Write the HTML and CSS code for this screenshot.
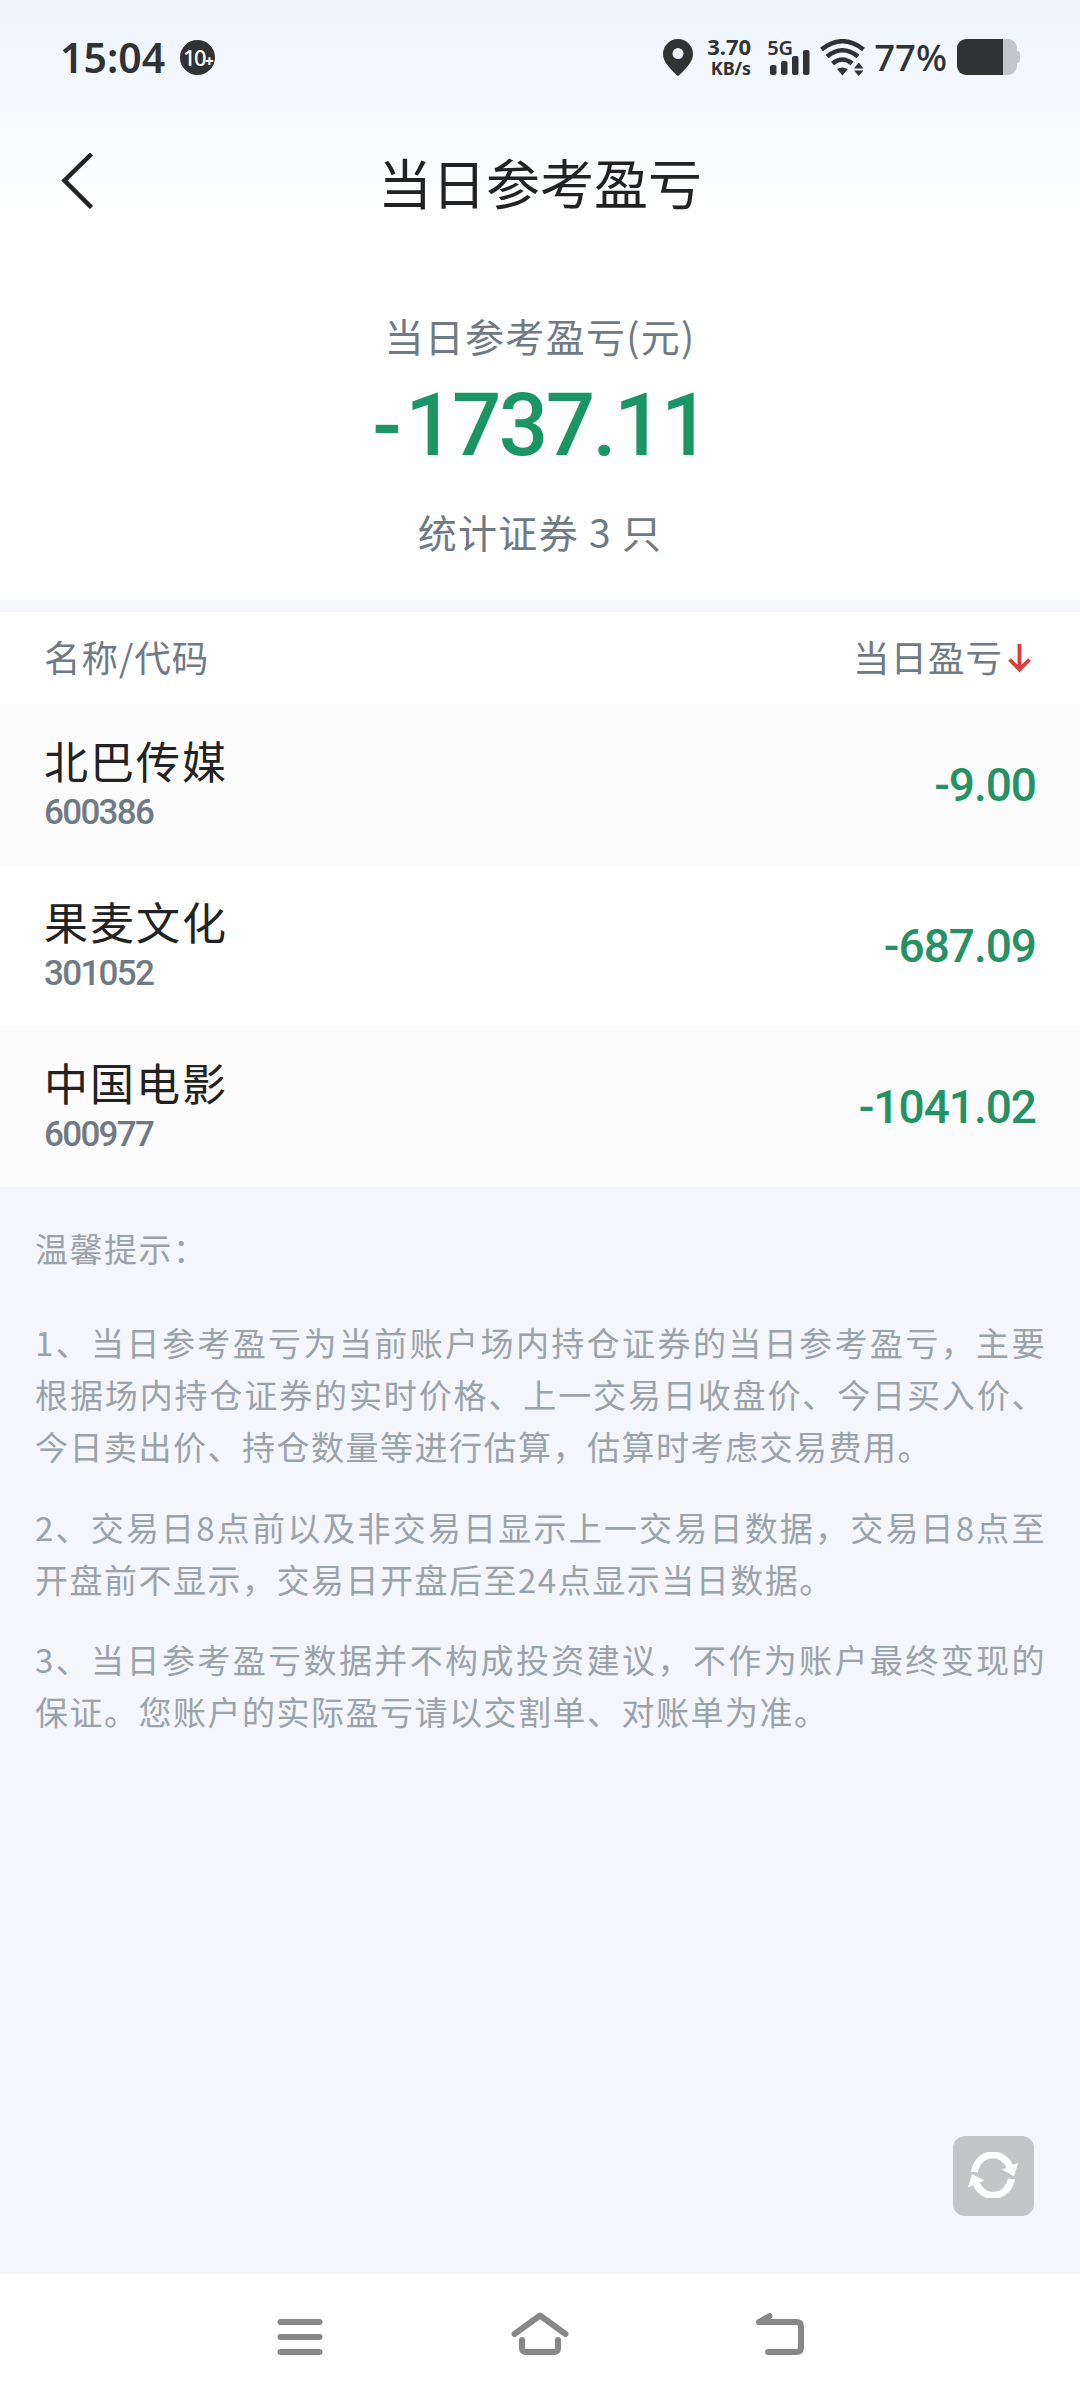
FILE: index.html
```html
<!DOCTYPE html>
<html lang="zh-CN">
<head>
    <meta charset="UTF-8">
    <meta name="viewport" content="width=device-width, initial-scale=1.0">
    <title>当日参考盈亏</title>
    <link rel="stylesheet" href="styles.css">
</head>
<body>
    <div class="page">
        <header class="header">
            <div class="status-bar">
                <div class="status-left">
                    <span class="time">15:04</span>
                    <span class="badge">10<span class="badge-plus">+</span></span>
                </div>
                <div class="status-right">
                    <svg class="icon-pin" width="30" height="37" viewBox="0 0 30 37">
                        <path fill="#303234" fill-rule="evenodd" d="M15 0a15 15 0 0 1 15 15c0 8-6 13-13.500 21q-1.500 1.500-3 0C6 28 0 23 0 15A15 15 0 0 1 15 0zm0 9a5.500 5.500 0 1 0 0 11a5.500 5.500 0 0 0 0-11z"/>
                    </svg>
                    <div class="speed"><span>3.70</span><span class="speed-unit">KB/s</span></div>
                    <div class="signal">
                        <span class="network">5G</span>
                        <svg class="bars" width="40" height="26" viewBox="0 0 40 26" fill="#303234">
                            <rect x="0" y="15" width="6.500" height="10" rx="2"/>
                            <rect x="11" y="11" width="6.500" height="14" rx="2"/>
                            <rect x="22" y="6" width="6.500" height="19" rx="2"/>
                            <rect x="33" y="0" width="6.500" height="25" rx="2"/>
                        </svg>
                    </div>
                    <svg class="icon-wifi" width="45" height="37" viewBox="0 0 45 37">
                        <g fill="none" stroke="#303234" stroke-width="4.500">
                            <path d="M1.500 10.500Q22.500-6 43.500 10.500"/>
                            <path d="M7 17.500Q22.500 5 38 17.500"/>
                            <path d="M12.500 24.500Q22.500 16.500 32 24.500"/>
                        </g>
                        <path fill="#303234" d="M17 30q5.500-3 11 0l-5.500 6.500zM34 29.500h9.500l-4.750-6zM34 31.500h9.500l-4.750 5.500z"/>
                    </svg>
                    <span class="battery-text">77%</span>
                    <svg class="icon-battery" width="64" height="36" viewBox="0 0 64 36">
                        <path fill="#c3c6ca" d="M45 0h6a9 9 0 0 1 9 9v3q3 0 3 3v6q0 3-3 3v3a9 9 0 0 1-9 9h-6z"/>
                        <path fill="#303234" d="M9 0h37v36H9a9 9 0 0 1-9-9V9a9 9 0 0 1 9-9z"/>
                    </svg>
                </div>
            </div>
            <div class="title-bar">
                <svg class="icon-back" width="34" height="60" viewBox="0 0 34 60">
                    <path d="M31.500 1L4.500 27.500L31.500 54.500" fill="none" stroke="#222" stroke-width="4.500"/>
                </svg>
                <h1 class="title">当日参考盈亏</h1>
            </div>
        </header>

        <section class="summary">
            <div class="summary-label">当日参考盈亏(元)</div>
            <div class="summary-value"><span class="minus">-</span>1737.11</div>
            <div class="summary-count">统计证券 3 只</div>
        </section>

        <section class="stocks">
            <div class="stocks-head">
                <span>名称/代码</span>
                <span class="sort">当日盈亏
                    <svg class="icon-sort" width="23" height="28" viewBox="0 0 23 28">
                        <path d="M11.500 0V25M1.500 15.500L11.500 25.500L21.500 15.500" fill="none" stroke="#e03c3c" stroke-width="3.800"/>
                    </svg>
                </span>
            </div>
            <div class="stock">
                <div>
                    <div class="stock-name">北巴传媒</div>
                    <div class="stock-code">600386</div>
                </div>
                <div class="stock-profit">-9.00</div>
            </div>
            <div class="stock">
                <div>
                    <div class="stock-name">果麦文化</div>
                    <div class="stock-code">301052</div>
                </div>
                <div class="stock-profit">-687.09</div>
            </div>
            <div class="stock">
                <div>
                    <div class="stock-name">中国电影</div>
                    <div class="stock-code">600977</div>
                </div>
                <div class="stock-profit">-1041.02</div>
            </div>
        </section>

        <section class="tips">
            <p class="tips-title">温馨提示：</p>
            <p>1、当日参考盈亏为当前账户场内持仓证券的当日参考盈亏，主要根据场内持仓证券的实时价格、上一交易日收盘价、今日买入价、今日卖出价、持仓数量等进行估算，估算时考虑交易费用。</p>
            <p>2、交易日8点前以及非交易日显示上一交易日数据，交易日8点至开盘前不显示，交易日开盘后至24点显示当日数据。</p>
            <p>3、当日参考盈亏数据并不构成投资建议，不作为账户最终变现的保证。您账户的实际盈亏请以交割单、对账单为准。</p>
        </section>

        <button class="refresh" aria-label="刷新">
            <svg width="50" height="46" viewBox="0 0 50 46">
                <g fill="none" stroke="#fff" stroke-width="7">
                    <path d="M6.500 20A18.500 19.500 0 0 1 42 15"/>
                    <path d="M43.500 27A18.500 19.500 0 0 1 8 31"/>
                </g>
                <path fill="#fff" d="M34 17.500L50 11L46 24.500zM0 35.500L4 22L16.500 28.500z"/>
            </svg>
        </button>

        <nav class="bottom-nav">
            <svg width="60" height="50" viewBox="0 0 60 50">
                <path d="M10.500 12H49.500M10.500 27H49.500M10.500 42H49.500"/>
            </svg>
            <svg width="60" height="50" viewBox="0 0 60 50">
                <path d="M4.500 24L30 5.500L55.500 24M12 30V38Q12 42 16 42H44Q48 42 48 38V30"/>
            </svg>
            <svg width="60" height="50" viewBox="0 0 60 50">
                <path d="M19.500 6L9 12H46.500Q51 12 51 16.500V37.500Q51 42 46.500 42H18"/>
            </svg>
        </nav>
    </div>
</body>
</html>
```
FILE: styles.css
```css
* {
    box-sizing: border-box;
    margin: 0;
    padding: 0;
}

body {
    font-family: "Noto Sans CJK SC", sans-serif;
    background-color: #f4f6fb;
    color: #222;
}

.page {
    position: relative;
    display: flex;
    flex-direction: column;
    width: 1080px;
    height: 2400px;
}

/* Header */
.header {
    height: 252px;
    background: linear-gradient(#eef5fe, #f5f8fe 35%, #fff 90%);
}

.status-bar {
    display: flex;
    justify-content: space-between;
    align-items: center;
    height: 114px;
    padding: 0 60px;
    color: #303234;
    font-family: "Noto Sans", sans-serif;
    font-weight: 600;
}

.status-left,
.status-right {
    display: flex;
    align-items: center;
}

.time {
    font-size: 41px;
    line-height: 56px;
}

.badge {
    display: flex;
    justify-content: center;
    align-items: center;
    width: 35px;
    height: 35px;
    margin-left: 15px;
    border-radius: 50%;
    background-color: #303234;
    color: #fff;
    font-size: 22px;
    font-weight: 500;
    letter-spacing: -1.5px;
}

.badge-plus {
    margin-top: 8px;
    font-size: 15px;
    font-weight: 900;
}

.speed {
    display: flex;
    flex-direction: column;
    align-items: flex-end;
    width: 46px;
    margin-left: 12px;
    font-size: 22px;
    font-weight: 700;
    line-height: 22px;
}

.speed-unit {
    font-size: 18px;
}

.signal {
    display: flex;
    flex-direction: column;
    width: 43px;
    height: 38px;
    margin-left: 16px;
}

.network {
    font-size: 20px;
    line-height: 19px;
}

.bars {
    margin: -7px 0 0 3px;
}

.icon-wifi {
    margin-left: 10px;
}

.battery-text {
    margin-left: 9px;
    font-size: 36.5px;
    font-weight: 500;
    line-height: 50px;
}

.icon-battery {
    margin-left: 10px;
    margin-right: -1px;
}

.title-bar {
    display: grid;
    grid-template-columns: 60px 1fr 60px;
    align-items: center;
    height: 138px;
    padding: 0 60px;
}

.title {
    padding-bottom: 3px;
    font-size: 54px;
    font-weight: 400;
    line-height: 80px;
    text-align: center;
}

/* Summary */
.summary {
    height: 360px;
    padding-top: 53px;
    border-bottom: 12px solid #f4f6fb;
    background-color: #fff;
    color: #707a85;
    text-align: center;
}

.summary-label,
.summary-count {
    font-size: 39px;
    line-height: 60px;
    letter-spacing: 1.3px;
}

.summary-value {
    margin: 8px 0 24px;
    color: #1a9563;
    font-family: Roboto, sans-serif;
    font-size: 87px;
    font-weight: 500;
    line-height: 104px;
    letter-spacing: -2.6px;
}

.minus {
    margin-right: 6px;
}

/* Stock list */
.stocks-head {
    display: flex;
    justify-content: space-between;
    align-items: center;
    height: 92px;
    padding: 0 44px 4px;
    background-color: #fff;
    color: #707a85;
    font-size: 36.5px;
    letter-spacing: 1px;
}

.sort {
    display: flex;
    align-items: center;
    gap: 5px;
    padding-right: 5px;
}

.icon-sort {
    margin-top: 4px;
}

.stock {
    display: flex;
    justify-content: space-between;
    align-items: center;
    height: 161px;
    padding: 0 44px;
    background-color: #fbfbfc;
}

.stock:nth-child(odd) {
    background-color: #fff;
}

.stock-name {
    font-size: 44px;
    line-height: 56px;
    letter-spacing: 2px;
}

.stock-code {
    padding: 4px 0;
    color: #707a85;
    font-family: Roboto, sans-serif;
    font-size: 35px;
    font-weight: 500;
    line-height: 42px;
    letter-spacing: -1.7px;
}

.stock-profit {
    color: #249264;
    font-family: Roboto, sans-serif;
    font-size: 46px;
    font-weight: 500;
    letter-spacing: -1px;
}

/* Tips */
.tips {
    flex: 1;
    padding: 36px 34px 0 35px;
    color: #9aa2aa;
    font-size: 33px;
    line-height: 51.9px;
    letter-spacing: 1.5px;
    text-align: justify;
}

.tips p {
    margin-bottom: 29px;
}

.tips .tips-title {
    margin-bottom: 42px;
}

/* Floating refresh button */
.refresh {
    position: absolute;
    right: 46px;
    bottom: 184px;
    display: flex;
    justify-content: center;
    align-items: center;
    width: 81px;
    height: 80px;
    padding: 0 1px 2px 0;
    border: none;
    border-radius: 12px;
    background-color: #c4c5c7;
}

/* System navigation */
.bottom-nav {
    display: flex;
    justify-content: center;
    gap: 180px;
    height: 126px;
    padding-top: 36px;
    background-color: #fff;
}

.bottom-nav path {
    fill: none;
    stroke: #888;
    stroke-width: 6;
    stroke-linecap: round;
    stroke-linejoin: round;
}
```
